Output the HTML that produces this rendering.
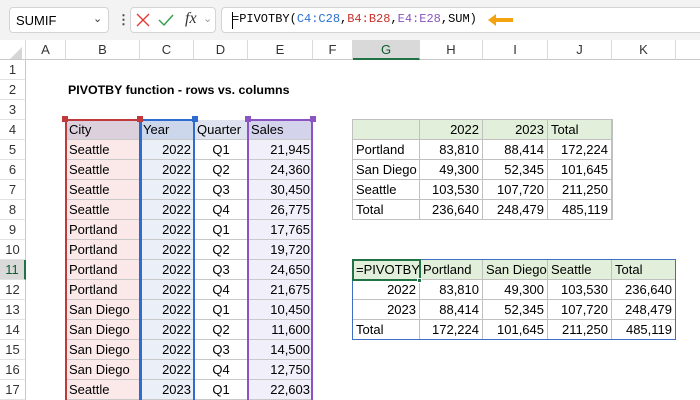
<!DOCTYPE html>
<html style="overflow:hidden;width:700px;height:400px"><head><meta charset="utf-8"><style>
*{box-sizing:border-box;margin:0;padding:0}
body{width:700px;height:400px;overflow:hidden;background:#fff;font-family:"Liberation Sans",sans-serif;font-size:13px;color:#000;position:relative}
.bar{position:absolute;left:0;top:0;width:700px;height:40px;background:#f3f3f3}
.box{position:absolute;background:#fff;border:1px solid #d4d4d4;border-radius:4px}
.ab{position:absolute}
.ch{position:absolute;top:40px;height:20px;border-right:1px solid #dadada;border-bottom:1px solid #c8c8c8;text-align:center;line-height:20px;color:#333;font-size:13px;background:#fff}
.rh{position:absolute;left:0;width:26px;height:20px;border-right:1px solid #c8c8c8;border-bottom:1px solid #e2e2e2;text-align:center;line-height:20px;color:#333;background:#fff}
.c{position:absolute;height:20px;line-height:20px;padding:0 3px;white-space:nowrap;overflow:hidden}
.r{text-align:right}
.m{text-align:center}
.g{border-right:1px solid #c0c0c0;border-bottom:1px solid #c0c0c0}
.hl{border-bottom:1px solid #c9c9c9}
</style></head><body>
<div class="bar"></div>
<div class="box" style="left:9px;top:7px;width:100px;height:26px"></div>
<div class="ab" style="left:16px;top:13px;font-size:13px">SUMIF</div>
<div class="ab" style="left:93px;top:12px;font-size:11px;color:#333">&#8964;</div>
<div class="ab" style="left:117px;top:12px;font-size:13px;color:#444;font-weight:bold">&#8942;</div>
<div class="box" style="left:130px;top:7px;width:86px;height:26px"></div>
<svg class="ab" style="left:136px;top:13px" width="14" height="14"><path d="M1 1L13 13M13 1L1 13" stroke="#e03a3a" stroke-width="1.4" fill="none"/></svg>
<svg class="ab" style="left:158px;top:13px" width="16" height="14"><path d="M1 7L6 12L15 2" stroke="#2e9e4a" stroke-width="1.4" fill="none"/></svg>
<div class="ab" style="left:185px;top:10px;font-family:'Liberation Serif',serif;font-style:italic;font-size:16px;color:#333">fx</div>
<div class="ab" style="left:203px;top:12px;font-size:11px;color:#999">&#8964;</div>
<div class="box" style="left:221px;top:7px;width:485px;height:26px"></div>
<div class="ab" style="left:232px;top:12px;width:1px;height:17px;background:#000"></div>
<div class="ab" style="left:232px;top:12px;font-family:'Liberation Mono',monospace;font-size:12px">=PIVOTBY(<span style="color:#2a6fd0">C4:C28</span>,<span style="color:#c9302c">B4:B28</span>,<span style="color:#8a55c2">E4:E28</span>,SUM)</div>
<svg class="ab" style="left:486px;top:12px" width="30" height="16"><path d="M2 8L10 2L10 6L27 6L27 10L10 10L10 14Z" fill="#f2a30f"/></svg>

<div class="ch" style="left:0;width:26px"></div>
<svg class="ab" style="left:10px;top:47px" width="12" height="12"><path d="M12 0L12 12L0 12Z" fill="#d6d6d6"/></svg>
<div class="ch" style="left:26px;width:40px">A</div>
<div class="ch" style="left:66px;width:74px">B</div>
<div class="ch" style="left:140px;width:54px">C</div>
<div class="ch" style="left:194px;width:54px">D</div>
<div class="ch" style="left:248px;width:65px">E</div>
<div class="ch" style="left:313px;width:40px">F</div>
<div class="ch" style="left:353px;width:67px;background:#d9d9d9;border-bottom:2px solid #217346;color:#0e5c2f">G</div>
<div class="ch" style="left:420px;width:63px">H</div>
<div class="ch" style="left:483px;width:65px">I</div>
<div class="ch" style="left:548px;width:64px">J</div>
<div class="ch" style="left:612px;width:64px">K</div>
<div class="ch" style="left:676px;width:30px"></div>

<div class="rh" style="top:60px">1</div>
<div class="rh" style="top:80px">2</div>
<div class="rh" style="top:100px">3</div>
<div class="rh" style="top:120px">4</div>
<div class="rh" style="top:140px">5</div>
<div class="rh" style="top:160px">6</div>
<div class="rh" style="top:180px">7</div>
<div class="rh" style="top:200px">8</div>
<div class="rh" style="top:220px">9</div>
<div class="rh" style="top:240px">10</div>
<div class="rh" style="top:260px;background:#d9d9d9;border-right:2px solid #217346;color:#0e5c2f">11</div>
<div class="rh" style="top:280px">12</div>
<div class="rh" style="top:300px">13</div>
<div class="rh" style="top:320px">14</div>
<div class="rh" style="top:340px">15</div>
<div class="rh" style="top:360px">16</div>
<div class="rh" style="top:380px">17</div>

<div class="c" style="left:65px;top:80px;font-weight:bold;font-size:12.4px">PIVOTBY function - rows vs. columns</div>

<div class="ab" style="left:66px;top:120px;width:74px;height:20px;background:#dcd0dc"></div>
<div class="ab" style="left:140px;top:120px;width:54px;height:20px;background:#cdd7ec"></div>
<div class="ab" style="left:194px;top:120px;width:54px;height:20px;background:#dfe3ef"></div>
<div class="ab" style="left:248px;top:120px;width:65px;height:20px;background:#d3d3ec"></div>
<div class="ab" style="left:66px;top:140px;width:74px;height:260px;background:#fbe9ea"></div>
<div class="ab" style="left:140px;top:140px;width:54px;height:260px;background:#ebeff8"></div>
<div class="ab" style="left:248px;top:140px;width:65px;height:260px;background:#f1eff9"></div>

<div style="position:absolute;left:0;top:0">
<div class="c hl" style="left:66px;top:120px;width:74px">City</div><div class="c hl" style="left:140px;top:120px;width:54px">Year</div><div class="c hl" style="left:194px;top:120px;width:54px">Quarter</div><div class="c hl" style="left:248px;top:120px;width:65px">Sales</div>
<div class="c hl" style="left:66px;top:140px;width:74px">Seattle</div><div class="c hl r" style="left:140px;top:140px;width:54px">2022</div><div class="c hl m" style="left:194px;top:140px;width:54px">Q1</div><div class="c hl r" style="left:248px;top:140px;width:65px">21,945</div>
<div class="c hl" style="left:66px;top:160px;width:74px">Seattle</div><div class="c hl r" style="left:140px;top:160px;width:54px">2022</div><div class="c hl m" style="left:194px;top:160px;width:54px">Q2</div><div class="c hl r" style="left:248px;top:160px;width:65px">24,360</div>
<div class="c hl" style="left:66px;top:180px;width:74px">Seattle</div><div class="c hl r" style="left:140px;top:180px;width:54px">2022</div><div class="c hl m" style="left:194px;top:180px;width:54px">Q3</div><div class="c hl r" style="left:248px;top:180px;width:65px">30,450</div>
<div class="c hl" style="left:66px;top:200px;width:74px">Seattle</div><div class="c hl r" style="left:140px;top:200px;width:54px">2022</div><div class="c hl m" style="left:194px;top:200px;width:54px">Q4</div><div class="c hl r" style="left:248px;top:200px;width:65px">26,775</div>
<div class="c hl" style="left:66px;top:220px;width:74px">Portland</div><div class="c hl r" style="left:140px;top:220px;width:54px">2022</div><div class="c hl m" style="left:194px;top:220px;width:54px">Q1</div><div class="c hl r" style="left:248px;top:220px;width:65px">17,765</div>
<div class="c hl" style="left:66px;top:240px;width:74px">Portland</div><div class="c hl r" style="left:140px;top:240px;width:54px">2022</div><div class="c hl m" style="left:194px;top:240px;width:54px">Q2</div><div class="c hl r" style="left:248px;top:240px;width:65px">19,720</div>
<div class="c hl" style="left:66px;top:260px;width:74px">Portland</div><div class="c hl r" style="left:140px;top:260px;width:54px">2022</div><div class="c hl m" style="left:194px;top:260px;width:54px">Q3</div><div class="c hl r" style="left:248px;top:260px;width:65px">24,650</div>
<div class="c hl" style="left:66px;top:280px;width:74px">Portland</div><div class="c hl r" style="left:140px;top:280px;width:54px">2022</div><div class="c hl m" style="left:194px;top:280px;width:54px">Q4</div><div class="c hl r" style="left:248px;top:280px;width:65px">21,675</div>
<div class="c hl" style="left:66px;top:300px;width:74px">San Diego</div><div class="c hl r" style="left:140px;top:300px;width:54px">2022</div><div class="c hl m" style="left:194px;top:300px;width:54px">Q1</div><div class="c hl r" style="left:248px;top:300px;width:65px">10,450</div>
<div class="c hl" style="left:66px;top:320px;width:74px">San Diego</div><div class="c hl r" style="left:140px;top:320px;width:54px">2022</div><div class="c hl m" style="left:194px;top:320px;width:54px">Q2</div><div class="c hl r" style="left:248px;top:320px;width:65px">11,600</div>
<div class="c hl" style="left:66px;top:340px;width:74px">San Diego</div><div class="c hl r" style="left:140px;top:340px;width:54px">2022</div><div class="c hl m" style="left:194px;top:340px;width:54px">Q3</div><div class="c hl r" style="left:248px;top:340px;width:65px">14,500</div>
<div class="c hl" style="left:66px;top:360px;width:74px">San Diego</div><div class="c hl r" style="left:140px;top:360px;width:54px">2022</div><div class="c hl m" style="left:194px;top:360px;width:54px">Q4</div><div class="c hl r" style="left:248px;top:360px;width:65px">12,750</div>
<div class="c hl" style="left:66px;top:380px;width:74px">Seattle</div><div class="c hl r" style="left:140px;top:380px;width:54px">2023</div><div class="c hl m" style="left:194px;top:380px;width:54px">Q1</div><div class="c hl r" style="left:248px;top:380px;width:65px">22,603</div>
</div>
<div class="ab" style="left:247px;top:120px;width:1px;height:280px;background:#c0c0c0"></div>
<div class="ab" style="left:65px;top:119px;width:76px;height:281px;border:2px solid #c0393b;border-bottom:none"></div>
<div class="ab" style="left:140px;top:119px;width:55px;height:281px;border:2px solid #2f6ccf;border-bottom:none"></div>
<div class="ab" style="left:247px;top:119px;width:66px;height:281px;border:2px solid #8a55c2;border-bottom:none"></div>
<div class="ab" style="left:62px;top:116px;width:6px;height:6px;background:#c0393b"></div>
<div class="ab" style="left:137px;top:116px;width:6px;height:6px;background:#c0393b"></div>
<div class="ab" style="left:192px;top:116px;width:6px;height:6px;background:#2f6ccf"></div>
<div class="ab" style="left:245px;top:116px;width:6px;height:6px;background:#8a55c2"></div>
<div class="ab" style="left:310px;top:116px;width:6px;height:6px;background:#8a55c2"></div>

<div class="ab" style="left:353px;top:120px;width:259px;height:20px;background:#e2efda"></div>
<div class="ab" style="left:352px;top:119px;width:261px;height:101px;border:1px solid #c0c0c0"></div>
<div class="c g" style="left:353px;top:120px;width:67px"></div><div class="c g r" style="left:420px;top:120px;width:63px">2022</div><div class="c g r" style="left:483px;top:120px;width:65px">2023</div><div class="c g" style="left:548px;top:120px;width:64px">Total</div>
<div class="c g" style="left:353px;top:140px;width:67px">Portland</div><div class="c g r" style="left:420px;top:140px;width:63px">83,810</div><div class="c g r" style="left:483px;top:140px;width:65px">88,414</div><div class="c g r" style="left:548px;top:140px;width:64px">172,224</div>
<div class="c g" style="left:353px;top:160px;width:67px">San Diego</div><div class="c g r" style="left:420px;top:160px;width:63px">49,300</div><div class="c g r" style="left:483px;top:160px;width:65px">52,345</div><div class="c g r" style="left:548px;top:160px;width:64px">101,645</div>
<div class="c g" style="left:353px;top:180px;width:67px">Seattle</div><div class="c g r" style="left:420px;top:180px;width:63px">103,530</div><div class="c g r" style="left:483px;top:180px;width:65px">107,720</div><div class="c g r" style="left:548px;top:180px;width:64px">211,250</div>
<div class="c g" style="left:353px;top:200px;width:67px">Total</div><div class="c g r" style="left:420px;top:200px;width:63px">236,640</div><div class="c g r" style="left:483px;top:200px;width:65px">248,479</div><div class="c g r" style="left:548px;top:200px;width:64px">485,119</div>

<div class="ab" style="left:353px;top:260px;width:323px;height:20px;background:#e2efda"></div>
<div class="c g" style="left:353px;top:260px;width:67px">=PIVOTBY</div><div class="c g" style="left:420px;top:260px;width:63px">Portland</div><div class="c g" style="left:483px;top:260px;width:65px">San Diego</div><div class="c g" style="left:548px;top:260px;width:64px">Seattle</div><div class="c g" style="left:612px;top:260px;width:64px">Total</div>
<div class="c g r" style="left:353px;top:280px;width:67px">2022</div><div class="c g r" style="left:420px;top:280px;width:63px">83,810</div><div class="c g r" style="left:483px;top:280px;width:65px">49,300</div><div class="c g r" style="left:548px;top:280px;width:64px">103,530</div><div class="c g r" style="left:612px;top:280px;width:64px">236,640</div>
<div class="c g r" style="left:353px;top:300px;width:67px">2023</div><div class="c g r" style="left:420px;top:300px;width:63px">88,414</div><div class="c g r" style="left:483px;top:300px;width:65px">52,345</div><div class="c g r" style="left:548px;top:300px;width:64px">107,720</div><div class="c g r" style="left:612px;top:300px;width:64px">248,479</div>
<div class="c g" style="left:353px;top:320px;width:67px">Total</div><div class="c g r" style="left:420px;top:320px;width:63px">172,224</div><div class="c g r" style="left:483px;top:320px;width:65px">101,645</div><div class="c g r" style="left:548px;top:320px;width:64px">211,250</div><div class="c g r" style="left:612px;top:320px;width:64px">485,119</div>
<div class="ab" style="left:352px;top:259px;width:324px;height:81px;border:1px solid #3d6fc4"></div>
<div class="ab" style="left:352px;top:259px;width:69px;height:22px;border:2px solid #217346"></div>
<div class="ab" style="left:417px;top:278px;width:5px;height:5px;background:#217346;border:1px solid #fff"></div>
</body></html>
